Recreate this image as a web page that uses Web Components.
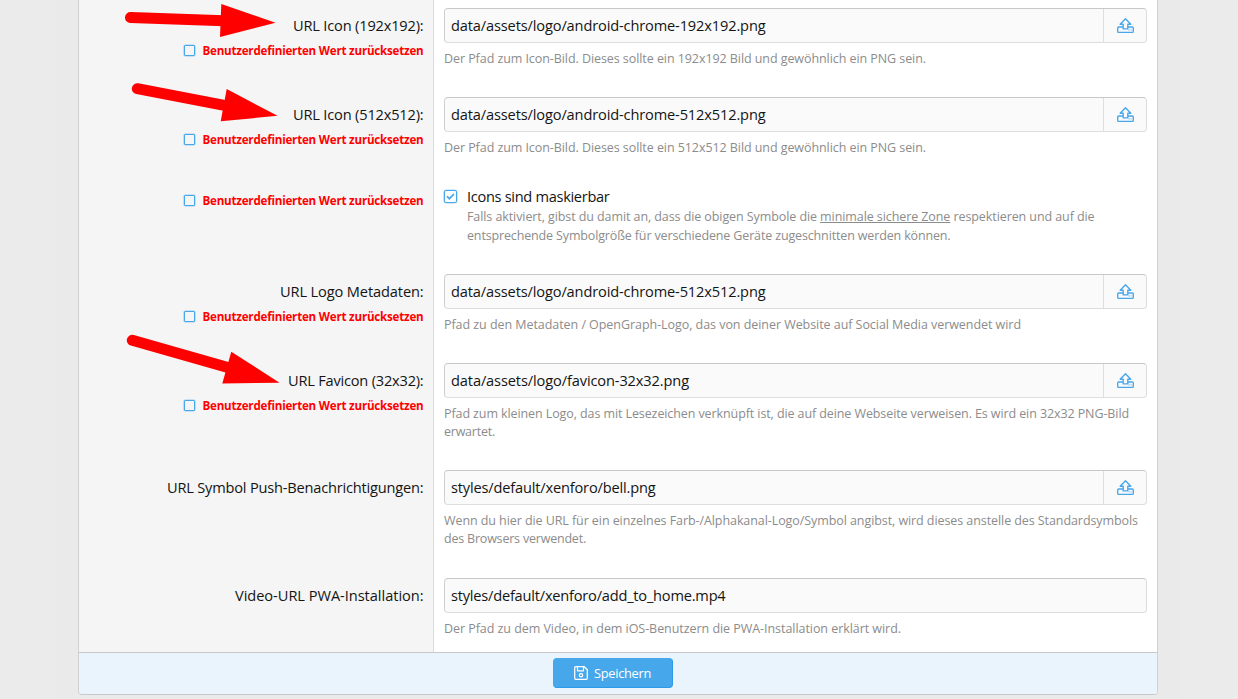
<!DOCTYPE html>
<html lang="de"><head><meta charset="utf-8"><title>Optionen</title>
<style>
html,body{margin:0;height:100%;overflow:hidden}
body{background:#ebebeb;font-family:"Open Sans","Noto Sans",sans-serif;color:#141414}
</style></head><body>
<settings-page></settings-page>
<script>
const define=(name,html,init)=>{
  const t=document.createElement('template');t.innerHTML=html;
  customElements.define(name,class extends HTMLElement{
    connectedCallback(){
      if(this.shadowRoot)return;
      this.attachShadow({mode:'open'}).append(t.content.cloneNode(true));
      if(init)init(this,this.shadowRoot);
    }
  });
};
// Tracks one line of text so that it fills the width given in "w".
function refit(el){
  const w=+el.getAttribute('w');el.style.letterSpacing='0px';
  const cur=el.getBoundingClientRect().width;
  if(w&&cur)el.style.letterSpacing=((w-cur)/el.textContent.length).toFixed(4)+'px';
}
define('fit-line',`<style>:host{display:block;white-space:nowrap;width:max-content}</style><slot></slot>`,refit);
define('upload-icon',`<style>:host{display:block;width:17px;height:15px}svg{display:block}</style>
<svg width="17" height="15" viewBox="0 0 17 15" fill="none" stroke="#47a7eb" stroke-width="1.35" stroke-linejoin="round"><path d="M8.5.8 3.2 6.2h3v4.7h4.6V6.2h3z"/><path d="M6.2 9H1.6q-.9 0-.9.9v3.5q0 .9.9.9h13.8q.9 0 .9-.9V9.9q0-.9-.9-.9h-4.6"/><path d="M11.7 11.9h.9M13.7 11.9h.9" stroke-width="1"/></svg>`);
define('check-box',`<style>:host{display:block;box-sizing:border-box;width:11px;height:11px;border:1px solid #47a7eb;border-radius:1px;flex:none;box-shadow:0 0 0 .3px #47a7eb}
:host([checked]){width:13px;height:13px;border-radius:2px}svg{display:none}:host([checked]) svg{display:block}</style>
<svg width="11" height="11" viewBox="0 0 11 11" fill="none" stroke="#47a7eb" stroke-width="1.7"><path d="M2 5.3 4.4 7.7 9 3"/></svg>`);
define('reset-option',`<style>:host{display:flex;align-items:center;height:18px;gap:7.5px;color:#f00;font-weight:700;font-size:11.6px;line-height:18px}check-box{margin-top:-2px}</style>
<check-box></check-box><fit-line w="221">Benutzerdefinierten Wert zurücksetzen</fit-line>`);
define('path-input',`<style>:host{display:flex;box-sizing:border-box;height:35px;border:1px solid #dedede;border-top-color:#c8c8c8;border-left-color:#d0d0d0;border-radius:4px;background:#fafafa;font-size:14.6px;line-height:33px}
.v{flex:1;padding-left:6px}.b{box-sizing:border-box;width:43px;border-left:1px solid #dedede;display:flex;align-items:center;justify-content:center}:host([plain]) .b{display:none}upload-icon{margin-right:-1px}</style>
<div class="v"><slot></slot></div><div class="b"><upload-icon></upload-icon></div>`);
define('form-hint',`<style>:host{display:block;font-size:12.5px;line-height:18px;color:#8c8c8c;margin-top:7px}</style><slot></slot>`);
define('form-row',`<style>:host{display:grid;grid-template-columns:355px 1fr;box-sizing:border-box}
.l{display:flex;flex-direction:column;align-items:flex-end;box-sizing:border-box;padding:7px 9.5px 0 0;font-size:14.6px;line-height:21px;border-right:1px solid #dbdbdb;background:#f5f5f5}
.r{padding:0 10px}::slotted(reset-option){margin-top:6px}</style>
<div class="l"><slot name="label"></slot></div><div class="r"><slot></slot></div>`,(el)=>{el.style.height=el.getAttribute('h')+'px'});
define('save-button',`<style>:host{display:flex;align-items:center;justify-content:center;gap:6px;box-sizing:border-box;width:120px;height:30px;border-radius:4px;background:#47a7eb;border:1px solid #47a7eb;border-right-color:#2b9ae8;border-bottom-color:#2b9ae8;color:#fff;font-size:12.8px;line-height:20px}svg{margin-top:1px}fit-line{margin-top:1px;margin-right:1px}</style>
<svg width="14" height="14" viewBox="0 0 14 14" fill="none" stroke="#fff" stroke-width="1.25" stroke-linejoin="round"><path d="M1.8.7h8.5l3 3v8.5q0 1.1-1.1 1.1H1.8q-1.1 0-1.1-1.1V1.8Q.7.7 1.8.7z"/><path d="M3.5 1v3.8h6V1"/><circle cx="7" cy="9.2" r="1.7"/></svg><fit-line w="57">Speichern</fit-line>`);
define('red-arrows',`<style>:host{position:absolute;left:0;top:0;width:433px;height:400px;pointer-events:none}svg{display:block}</style>
<svg width="433" height="400" fill="red" stroke="none"><g stroke="red" stroke-width="11" stroke-linecap="round"><path d="M130.5 17.6 224 20.7M137.3 88.7 223 105.1M132.3 340.3 227 367.3"/></g>
<path d="M221.3 4 275.5 22.7 220 37zM226.7 89 277.5 115.8 220.7 121.3zM231.3 351.7 279.5 382.7 222.3 383.4z"/></svg>`);
define('settings-page',`<style>
:host{display:block;height:699px;position:relative;background:linear-gradient(90deg,#ebebeb 0 56px,#eaeaea 56px 1182px,#ebebeb 1182px)}
.panel{width:1078px;margin:0 auto 0 78px;height:694px;background:linear-gradient(90deg,#f5f5f5 354px,#dbdbdb 354px 355px,#fff 355px);border:1px solid #d1d1d1;border-top:0;border-bottom-color:#c9c9c9;border-radius:0 0 4px 4px;overflow:hidden}
.rows{padding-top:8px}
.foot{height:41px;background:#e9f4fd;border-top:1px solid #c8c8c8;display:flex;align-items:center;justify-content:center}
save-button{margin:0 10px 2px 0}
.check{display:flex;gap:10px;font-size:14.6px;line-height:20px}.check check-box{margin-top:4px}.check form-hint{margin-top:1px;line-height:19px}
.only{margin-top:-1px!important}
u{text-underline-offset:1px}
</style>
<div class="panel"><div class="rows">
<form-row h="89"><fit-line slot="label" w="130.5">URL Icon (192x192):</fit-line><reset-option slot="label"></reset-option><path-input><fit-line w="314.5">data/assets/logo/android-chrome-192x192.png</fit-line></path-input><form-hint><fit-line w="482">Der Pfad zum Icon-Bild. Dieses sollte ein 192x192 Bild und gewöhnlich ein PNG sein.</fit-line></form-hint></form-row>
<form-row h="89"><fit-line slot="label" w="130.5">URL Icon (512x512):</fit-line><reset-option slot="label"></reset-option><path-input><fit-line w="314.5">data/assets/logo/android-chrome-512x512.png</fit-line></path-input><form-hint><fit-line w="482">Der Pfad zum Icon-Bild. Dieses sollte ein 512x512 Bild und gewöhnlich ein PNG sein.</fit-line></form-hint></form-row>
<form-row h="88"><reset-option slot="label" class="only"></reset-option><div class="check"><check-box checked></check-box><div><fit-line w="142.5">Icons sind maskierbar</fit-line><form-hint><fit-line w="627.5">Falls aktiviert, gibst du damit an, dass die obigen Symbole die <u>minimale sichere Zone</u> respektieren und auf die</fit-line><fit-line w="483.5">entsprechende Symbolgröße für verschiedene Geräte zugeschnitten werden können.</fit-line></form-hint></div></div></form-row>
<form-row h="89"><fit-line slot="label" w="143.5">URL Logo Metadaten:</fit-line><reset-option slot="label"></reset-option><path-input><fit-line w="314.5">data/assets/logo/android-chrome-512x512.png</fit-line></path-input><form-hint><fit-line w="577">Pfad zu den Metadaten / OpenGraph-Logo, das von deiner Website auf Social Media verwendet wird</fit-line></form-hint></form-row>
<form-row h="107"><fit-line slot="label" w="135.5">URL Favicon (32x32):</fit-line><reset-option slot="label"></reset-option><path-input><fit-line w="238">data/assets/logo/favicon-32x32.png</fit-line></path-input><form-hint><fit-line w="685">Pfad zum kleinen Logo, das mit Lesezeichen verknüpft ist, die auf deine Webseite verweisen. Es wird ein 32x32 PNG-Bild</fit-line><fit-line w="51">erwartet.</fit-line></form-hint></form-row>
<form-row h="108"><fit-line slot="label" w="256.5">URL Symbol Push-Benachrichtigungen:</fit-line><path-input><fit-line w="204.5">styles/default/xenforo/bell.png</fit-line></path-input><form-hint><fit-line w="694">Wenn du hier die URL für ein einzelnes Farb-/Alphakanal-Logo/Symbol angibst, wird dieses anstelle des Standardsymbols</fit-line><fit-line w="142">des Browsers verwendet.</fit-line></form-hint></form-row>
<form-row h="74"><fit-line slot="label" w="188.5">Video-URL PWA-Installation:</fit-line><path-input plain><fit-line w="274.5">styles/default/xenforo/add_to_home.mp4</fit-line></path-input><form-hint><fit-line w="457">Der Pfad zu dem Video, in dem iOS-Benutzern die PWA-Installation erklärt wird.</fit-line></form-hint></form-row>
</div><div class="foot"><save-button></save-button></div></div>
<red-arrows></red-arrows>`,(el,root)=>{
  // Tracking is settled once every element on the page has its final font size.
  root.querySelectorAll('fit-line').forEach(refit);
  root.querySelectorAll('reset-option,save-button').forEach(e=>e.shadowRoot.querySelectorAll('fit-line').forEach(refit));
});
</script></body></html>
